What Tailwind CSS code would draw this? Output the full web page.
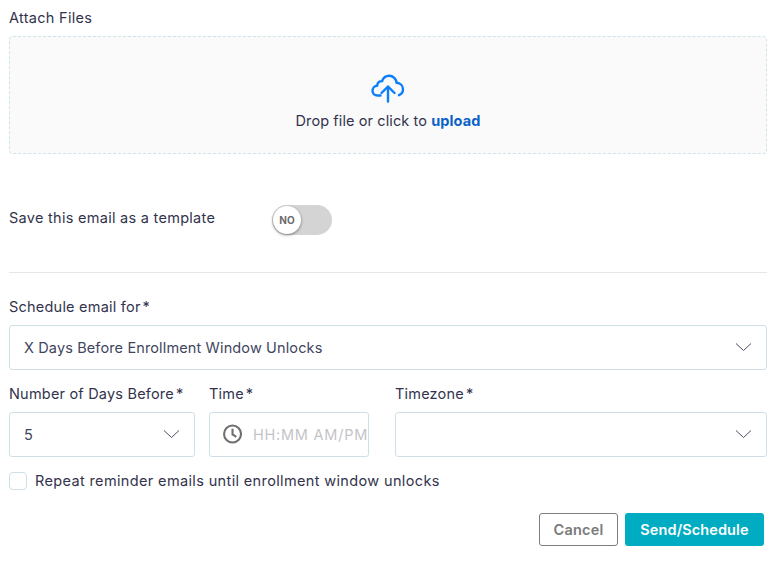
<!DOCTYPE html>
<html lang="en">
<head>
    <meta charset="UTF-8">
    <title>Attach Files</title>
    <script src="https://cdn.jsdelivr.net/npm/@tailwindcss/browser@4"></script>
</head>
<body class="bg-white">
    <div class="w-[773px] h-[566px] overflow-hidden pl-[9px] pr-[6px] pt-[9px] font-['Inter',sans-serif] text-[14.5px] text-[#33334d]">

        <!-- Attach files -->
        <div class="h-[18px] leading-[18px] tracking-[0.3px]">Attach Files</div>
        <div class="mt-[9px] h-[118px] flex flex-col items-center bg-[#fafafa] border border-dashed border-[#cfe3ea] rounded-[4px] pt-[35px]">
            <svg class="w-[34px] h-[32px]" viewBox="0 0 34 32" fill="none" stroke="#0b7ffa" stroke-width="2.4" stroke-linecap="round" stroke-linejoin="round">
                <path d="M9.500 23.500H6.500C3.500 23.500 1.500 21.300 1.500 18.700C1.500 15.900 3.600 13.900 6.200 13.700C6.200 10.800 8.500 8.800 11 9.200C12.300 5.800 14.900 3.800 18.100 3.800C22.200 3.800 25.300 6.900 25.600 10.800C29.300 11 32 13.800 32 17.300C32 20 30.400 22.200 28 23.200"/>
                <path d="M17 29.500V15"/>
                <path d="M10.500 21L17 14.500L23.500 21"/>
            </svg>
            <div class="mt-[7px] leading-[20px] tracking-[0.1px]">Drop file or click to <span class="font-bold text-[#0a62c9]">upload</span></div>
        </div>

        <!-- Template toggle -->
        <div class="mt-[51px] h-[30px] flex items-start">
            <div class="w-[263px] mt-[4px] leading-[18px] tracking-[0.28px]">Save this email as a template</div>
            <div class="w-[60px] h-[30px] rounded-full bg-[#d4d4d4] relative">
                <div class="absolute left-[1px] top-[1px] w-[28px] h-[28px] rounded-full bg-white shadow-[0_1px_3px_rgba(0,0,0,0.45)] flex items-center justify-center text-[10px] font-bold text-[#6b6b6b]">NO</div>
            </div>
        </div>

        <div class="mt-[37px] border-t border-[#e4e8ea] w-[758px]"></div>

        <!-- Schedule -->
        <div class="mt-[25px] h-[18px] leading-[18px] tracking-[0.22px]">Schedule email for<span class="ml-[2px]">*</span></div>
        <div class="mt-[9px] w-[758px] h-[45px] flex items-center justify-between bg-white border border-[#cfdfe8] rounded-[3px] pl-[14px] pr-[14px]">
            <span class="text-[#3f4560] tracking-[0.13px]">X Days Before Enrollment Window Unlocks</span>
            <svg class="w-[17px] h-[10px] -mt-[2px]" viewBox="0 0 17 10" fill="none" stroke="#4a4f63" stroke-width="1"><path d="M1 1.500L8.500 8.500L16 1.500"/></svg>
        </div>

        <div class="mt-[15px] flex">
            <div class="w-[186px] mr-[14px]">
                <div class="h-[18px] leading-[18px] tracking-[0.2px] whitespace-nowrap">Number of Days Before<span class="ml-[2px]">*</span></div>
                <div class="mt-[9px] h-[45px] flex items-center justify-between border border-[#cfdfe8] rounded-[3px] pl-[14px] pr-[14px]">
                    <span class="text-[#3f4560]">5</span>
                    <svg class="w-[17px] h-[10px] -mt-[2px]" viewBox="0 0 17 10" fill="none" stroke="#4a4f63" stroke-width="1"><path d="M1 1.500L8.500 8.500L16 1.500"/></svg>
                </div>
            </div>
            <div class="w-[160px] mr-[26px]">
                <div class="h-[18px] leading-[18px] tracking-[0.2px]">Time<span class="ml-[2px]">*</span></div>
                <div class="mt-[9px] h-[45px] flex items-center border border-[#cfdfe8] rounded-[3px] pl-[13px] overflow-hidden">
                    <svg class="w-[20px] h-[20px] -mt-[2px]" viewBox="0 0 20 20" fill="none" stroke="#6f6f6f" stroke-width="2.200"><circle cx="10" cy="10" r="8.900"/><path d="M10 4.500V10.500L14 13"/></svg>
                    <span class="ml-[11px] text-[#c4c4c8] whitespace-nowrap tracking-[0.75px]">HH:MM AM/PM</span>
                </div>
            </div>
            <div class="w-[372px]">
                <div class="h-[18px] leading-[18px] tracking-[0.2px]">Timezone<span class="ml-[2px]">*</span></div>
                <div class="mt-[9px] h-[45px] flex items-center justify-end border border-[#cfdfe8] rounded-[3px] pr-[14px]">
                    <svg class="w-[17px] h-[10px] -mt-[2px]" viewBox="0 0 17 10" fill="none" stroke="#4a4f63" stroke-width="1"><path d="M1 1.500L8.500 8.500L16 1.500"/></svg>
                </div>
            </div>
        </div>

        <!-- Repeat -->
        <label class="mt-[15px] h-[18px] flex items-center">
            <span class="w-[18px] h-[18px] bg-white border border-[#cfdfe8] rounded-[4px]"></span>
            <span class="ml-[8px] leading-[18px] tracking-[0.36px]">Repeat reminder emails until enrollment window unlocks</span>
        </label>

        <!-- Actions -->
        <div class="mt-[23px] w-[755px] flex justify-end gap-[7px]">
            <button class="w-[79px] h-[33px] border border-[#7d7d7d] rounded-[3px] bg-white text-[#7a7a7a] font-semibold tracking-[0.2px]">Cancel</button>
            <button class="w-[139px] h-[33px] rounded-[3px] bg-[#00acc1] text-white font-semibold tracking-[0.1px]">Send/Schedule</button>
        </div>
    </div>
</body>
</html>
